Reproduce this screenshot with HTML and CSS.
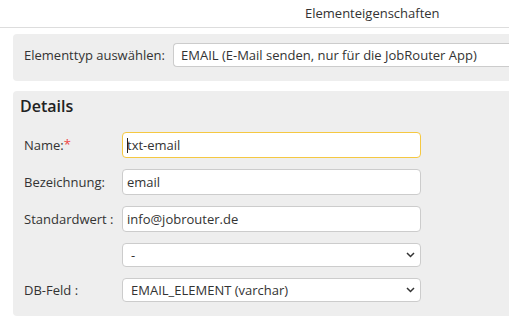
FILE: index.html
```html
<!DOCTYPE html>
<html lang="de">
<head>
<meta charset="utf-8">
<title>Elementeigenschaften</title>
<link rel="stylesheet" href="styles.css">
</head>
<body>
<header class="header"><span class="title">Elementeigenschaften</span></header>

<div class="panel type-panel">
  <label class="type-label">Elementtyp auswählen:</label>
  <select class="select type-select">
    <option>EMAIL (E-Mail senden, nur für die JobRouter App)</option>
  </select>
</div>

<section class="panel details">
  <h2 class="details-title">Details</h2>

  <div class="row">
    <label class="label">Name:<span class="req">*</span></label>
    <div class="field">
      <input class="input input-focus" type="text" value="txt-email">
      <span class="caret"></span>
    </div>
  </div>

  <div class="row">
    <label class="label">Bezeichnung:</label>
    <div class="field"><input class="input" type="text" value="email"></div>
  </div>

  <div class="row">
    <label class="label">Standardwert :</label>
    <div class="field"><input class="input" type="text" value="info@jobrouter.de"></div>
  </div>

  <div class="row">
    <label class="label"></label>
    <div class="field">
      <select class="select field-select"><option>-</option></select>
      <svg class="chevron" width="9" height="6" viewBox="0 0 9 6"><path d="M1 1l3.5 3.5L8 1" fill="none" stroke="#333" stroke-width="1.5"/></svg>
    </div>
  </div>

  <div class="row">
    <label class="label">DB-Feld :</label>
    <div class="field">
      <select class="select field-select"><option>EMAIL_ELEMENT (varchar)</option></select>
      <svg class="chevron" width="9" height="6" viewBox="0 0 9 6"><path d="M1 1l3.5 3.5L8 1" fill="none" stroke="#333" stroke-width="1.5"/></svg>
    </div>
  </div>
</section>
</body>
</html>
```

FILE: styles.css
```css
html, body {
  margin: 0;
  padding: 0;
  background: #fff;
  overflow: hidden;
}
body {
  font-family: "Open Sans", "Noto Sans", "DejaVu Sans", sans-serif;
  font-size: 13px;
  color: #333;
  width: 509px;
}

.header {
  height: 27px;
  line-height: 27px;
  border-bottom: 1px solid #dddddd;
  padding-left: 305px;
}
.title {
  color: #333;
  white-space: nowrap;
}

.panel {
  background: #eeeeee;
  border-radius: 4px 0 0 4px;
  margin-left: 13px;
}

.type-panel {
  margin-top: 6px;
  display: flex;
  align-items: center;
  padding: 9px 0 14px 11px;
}
.type-label {
  width: 149px;
  flex: none;
  white-space: nowrap;
}
.select {
  -webkit-appearance: none;
  appearance: none;
  font-family: inherit;
  font-size: 13px;
  color: #333;
  background: #fff;
  border: 1px solid #cccccc;
  border-radius: 4px;
  height: 24px;
  box-sizing: border-box;
  padding: 0 24px 0 8px;
  margin: 0;
  outline: none;
}
.type-select {
  flex: 1;
  min-width: 0;
  padding-left: 7px;
  border-right: none;
  border-radius: 4px 0 0 4px;
}

.details {
  margin-top: 10px;
  padding: 4px 0 14px 7px;
}
.details-title {
  margin: 0 0 15px 0;
  font-size: 16px;
  font-weight: 600;
  line-height: 22px;
  color: #222;
}

.row {
  display: flex;
  align-items: center;
  padding-left: 4px;
  margin-bottom: 11px;
}
.row:last-child {
  margin-bottom: 0;
}
.label {
  width: 98px;
  flex: none;
  white-space: nowrap;
  color: #333;
}
.req {
  color: #ee4444;
  font-size: 13px;
  position: relative;
  top: -1px;
}
.field {
  position: relative;
  width: 299px;
  flex: none;
}
.input {
  display: block;
  width: 100%;
  height: 26px;
  box-sizing: border-box;
  border: 1px solid #cccccc;
  border-radius: 4px;
  padding: 0 4px;
  margin: 0;
  font-family: inherit;
  font-size: 13px;
  color: #333;
  background: #fff;
  outline: none;
}
.input-focus {
  border-color: #f5c842;
}
.caret {
  position: absolute;
  left: 5px;
  top: 6px;
  width: 1px;
  height: 15px;
  background: #222;
}
.field-select {
  display: block;
  width: 100%;
}
.chevron {
  position: absolute;
  right: 6px;
  top: 9px;
  pointer-events: none;
}
```
